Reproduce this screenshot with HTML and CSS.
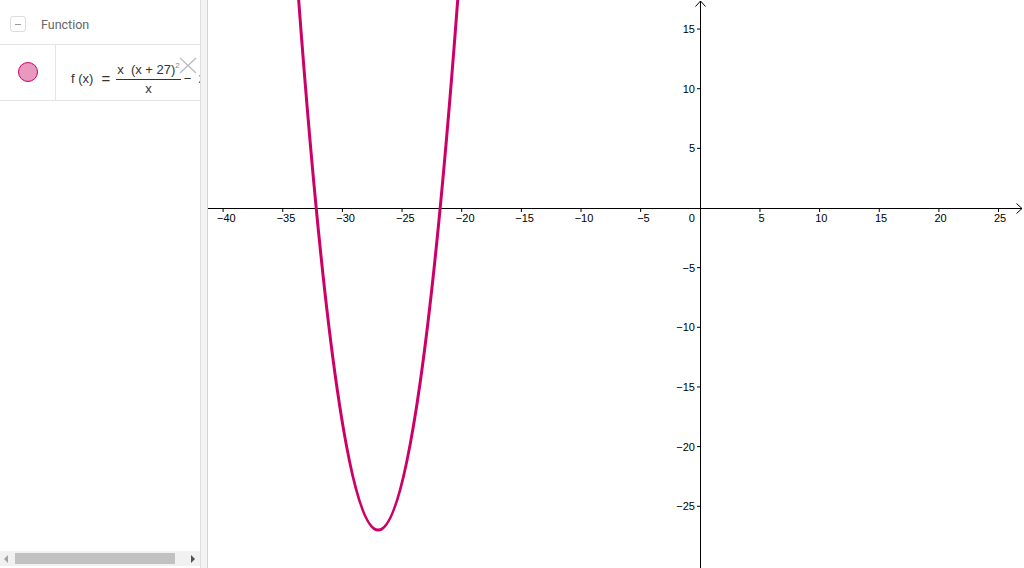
FILE: index.html
```html
<!DOCTYPE html>
<html>
<head>
<meta charset="utf-8">
<link rel="stylesheet" href="styles.css">
</head>
<body>
<div class="app">
  <aside class="algebra">
    <div class="header">
      <span class="collapse"><span class="dash"></span></span>
      <span class="title">Function</span>
    </div>
    <div class="item">
      <div class="marble-col"><span class="marble"></span></div>
      <div class="expr">
        <span class="fx">f (x)</span>
        <span class="eq">=</span>
        <span class="frac">
          <span class="num">x&nbsp; (x + 27)<sup>2</sup></span>
          <span class="den">x</span>
        </span>
        <span class="rest">−&nbsp;&nbsp;2</span>
      </div>
      <svg class="del" width="18" height="17" viewBox="0 0 18 17"><path d="M1 1 L17 16 M17 1 L1 16" stroke="#bdbdbd" stroke-width="1.4" fill="none"/></svg>
    </div>
    <div class="spacer"></div>
    <div class="hscroll">
      <span class="arr-left"></span>
      <span class="thumb"></span>
      <span class="arr-right"></span>
    </div>
    <div class="bottom-pad"></div>
  </aside>
  <div class="divider"></div>
  <main class="graphics">
    <svg class="plot" width="816" height="568" viewBox="0 0 816 568">
      <g class="axes" stroke="#000" stroke-width="1" fill="none">
        <line x1="0" y1="208.5" x2="814" y2="208.5"/>
        <path d="M808.5 203.5 L814 208.5 L808.5 213.5"/>
        <line x1="492.5" y1="1" x2="492.5" y2="568"/>
        <path d="M487.5 6.5 L492.5 1 L497.5 6.5"/>
      </g>
      <g class="ticks" stroke="#000" stroke-width="1">
        <line x1="15.1" y1="208" x2="15.1" y2="212"/>
        <line x1="74.75" y1="208" x2="74.75" y2="212"/>
        <line x1="134.4" y1="208" x2="134.4" y2="212"/>
        <line x1="194.05" y1="208" x2="194.05" y2="212"/>
        <line x1="253.7" y1="208" x2="253.7" y2="212"/>
        <line x1="313.35" y1="208" x2="313.35" y2="212"/>
        <line x1="373" y1="208" x2="373" y2="212"/>
        <line x1="432.65" y1="208" x2="432.65" y2="212"/>
        <line x1="551.95" y1="208" x2="551.95" y2="212"/>
        <line x1="611.6" y1="208" x2="611.6" y2="212"/>
        <line x1="671.25" y1="208" x2="671.25" y2="212"/>
        <line x1="730.9" y1="208" x2="730.9" y2="212"/>
        <line x1="790.55" y1="208" x2="790.55" y2="212"/>
        <line x1="489" y1="29.05" x2="492.5" y2="29.05"/>
        <line x1="489" y1="88.7" x2="492.5" y2="88.7"/>
        <line x1="489" y1="148.35" x2="492.5" y2="148.35"/>
        <line x1="489" y1="267.65" x2="492.5" y2="267.65"/>
        <line x1="489" y1="327.3" x2="492.5" y2="327.3"/>
        <line x1="489" y1="386.95" x2="492.5" y2="386.95"/>
        <line x1="489" y1="446.6" x2="492.5" y2="446.6"/>
        <line x1="489" y1="506.25" x2="492.5" y2="506.25"/>
      </g>
      <g class="xlabels">
        <text x="18.4" y="222">−40</text>
        <text x="78" y="222">−35</text>
        <text x="137.6" y="222">−30</text>
        <text x="197.4" y="222">−25</text>
        <text x="257.2" y="222">−20</text>
        <text x="316.6" y="222">−15</text>
        <text x="376" y="222">−10</text>
        <text x="435.4" y="222">−5</text>
        <text x="483.7" y="222">0</text>
        <text x="553.5" y="222">5</text>
        <text x="613.3" y="222">10</text>
        <text x="673" y="222">15</text>
        <text x="732.6" y="222">20</text>
        <text x="792" y="222">25</text>
      </g>
      <g class="ylabels">
        <text x="487" y="33">15</text>
        <text x="487" y="92.7">10</text>
        <text x="487" y="152.3">5</text>
        <text x="487" y="271.6">−5</text>
        <text x="487" y="331.3">−10</text>
        <text x="487" y="390.9">−15</text>
        <text x="487" y="450.6">−20</text>
        <text x="487" y="510.2">−25</text>
      </g>
      <path class="curve" d="M86.68 -54.46 Q170.19 1114.68 253.7 -54.46" fill="none" stroke="#cc0066" stroke-width="3"/>
    </svg>
  </main>
</div>
</body>
</html>
```
FILE: styles.css
```css
html, body {
  margin: 0;
  padding: 0;
  background: #fff;
}
.app {
  display: flex;
  width: 1024px;
  height: 568px;
  overflow: hidden;
  font-family: Roboto, "Liberation Sans", sans-serif;
}
.algebra {
  width: 200px;
  flex: none;
  display: flex;
  flex-direction: column;
  background: #fff;
}
.header {
  border-bottom: 1px solid #e4e4e4;
  display: flex;
  align-items: center;
  box-sizing: border-box;
  height: 45px;
  padding-top: 4px;
}
.collapse {
  width: 14px;
  height: 14px;
  margin-left: 10px;
  border: 1px solid #dcdcdc;
  border-radius: 3px;
  display: flex;
  align-items: center;
  justify-content: center;
}
.dash {
  width: 6px;
  height: 1px;
  background: #9a9a9a;
}
.title {
  margin-left: 15px;
  font-size: 12.5px;
  color: #666;
}
.item {
  position: relative;
  height: 56px;
  box-sizing: border-box;
  border-bottom: 1px solid #e4e4e4;
  display: flex;
  overflow: hidden;
}
.marble-col {
  width: 56px;
  flex: none;
  box-sizing: border-box;
  border-right: 1px solid #e4e4e4;
  display: flex;
  align-items: center;
  justify-content: center;
  padding-bottom: 1px;
}
.marble {
  width: 18px;
  height: 18px;
  border-radius: 50%;
  background: #e998c0;
  border: 1px solid #cc0066;
}
.expr {
  display: flex;
  align-items: center;
  padding-left: 15px;
  white-space: nowrap;
  font-family: "Liberation Sans", Roboto, sans-serif;
  font-size: 13px;
  color: #333;
  padding-top: 11px;
}
.fx {
  margin-right: 8px;
}
.eq {
  font-size: 15px;
  margin-right: 6px;
}
.frac {
  display: inline-flex;
  flex-direction: column;
  align-items: center;
  margin-top: 1px;
}
.num {
  padding: 0 1px 2px 1px;
  border-bottom: 1px solid #333;
  line-height: 15px;
}
.num sup {
  font-size: 8px;
  color: #888;
  vertical-align: 6px;
  line-height: 0;
}
.den {
  line-height: 15px;
  padding-top: 1px;
}
.rest {
  margin-left: 3px;
}
.del {
  position: absolute;
  left: 179px;
  top: 12px;
}
.spacer {
  flex: 1;
}
.hscroll {
  height: 15px;
  background: #f1f1f1;
  display: flex;
  align-items: center;
  position: relative;
}
.arr-left {
  width: 0;
  height: 0;
  margin-left: 4px;
  border-top: 4px solid transparent;
  border-bottom: 4px solid transparent;
  border-right: 4px solid #a3a3a3;
}
.thumb {
  margin-left: 7px;
  width: 160px;
  height: 11px;
  background: #c1c1c1;
}
.arr-right {
  width: 0;
  height: 0;
  margin-left: 16px;
  border-top: 4px solid transparent;
  border-bottom: 4px solid transparent;
  border-left: 4px solid #505050;
}
.bottom-pad {
  height: 2px;
}
.divider {
  width: 8px;
  flex: none;
  box-sizing: border-box;
  background: #f3f3f3;
  border-left: 1px solid #dedede;
  border-right: 1px solid #d3d3d3;
}
.graphics {
  flex: 1;
  position: relative;
  overflow: hidden;
}
.plot {
  display: block;
}
.xlabels text {
  font-family: "Liberation Sans", Arial, sans-serif;
  font-size: 11px;
  text-anchor: middle;
  fill: #000;
}
.ylabels text {
  font-family: "Liberation Sans", Arial, sans-serif;
  font-size: 11px;
  text-anchor: end;
  fill: #000;
}
```
